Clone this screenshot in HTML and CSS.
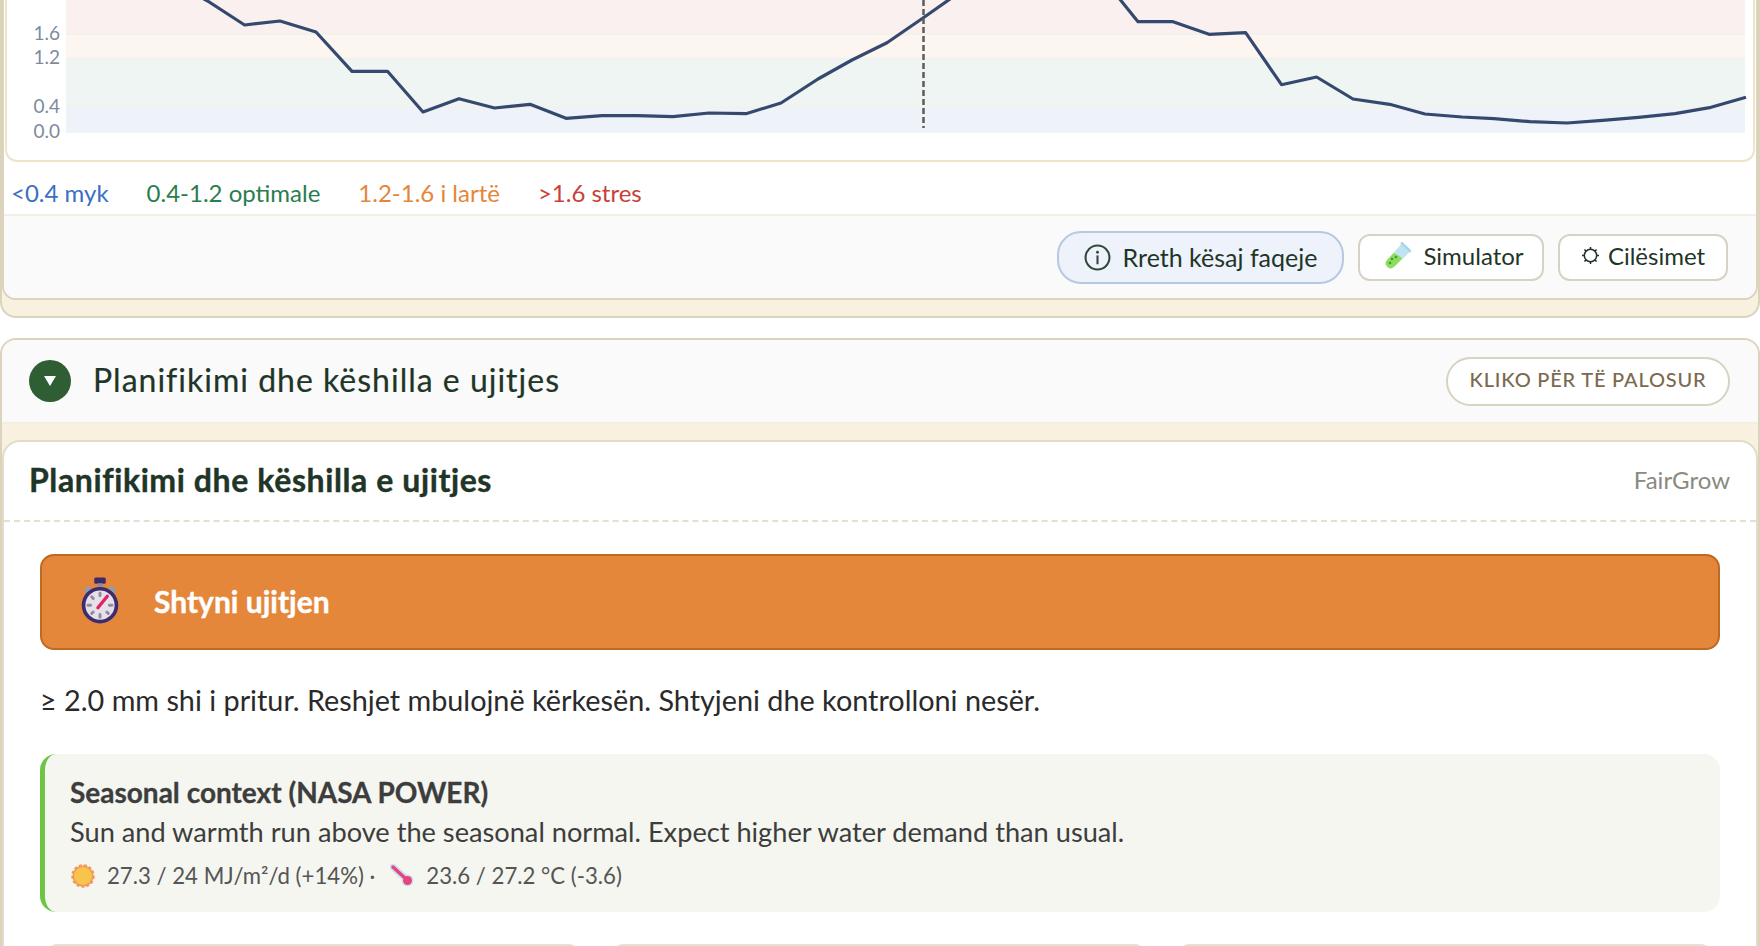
FILE: index.html
```html
<!DOCTYPE html>
<html lang="sq">
<head>
  <meta charset="UTF-8">
  <title>FairGrow - Planifikimi i ujitjes</title>
  <link rel="stylesheet" href="styles.css">
</head>

<body>

<section class="outer-card">
  <div class="panel">
    <div class="chart-box">
      <svg class="chart" viewBox="7 0 1746 142" width="1746" height="142">
        <rect x="66" y="0" width="1679" height="34" fill="#f9f0ef"/>
        <rect x="66" y="34" width="1679" height="24" fill="#fdf5ef"/>
        <rect x="66" y="58" width="1679" height="49" fill="#eff5f2"/>
        <rect x="66" y="107" width="1679" height="26" fill="#eef3fa"/>
        <g fill="#f1f1ee">
          <rect x="66" y="33" width="1679" height="2"/>
          <rect x="66" y="57.500" width="1679" height="2"/>
          <rect x="66" y="106.500" width="1679" height="2"/>
        </g>
        <g class="axis-label" text-anchor="end">
          <text x="60" y="40">1.6</text>
          <text x="60" y="64">1.2</text>
          <text x="60" y="113">0.4</text>
          <text x="60" y="138">0.0</text>
        </g>
        <polyline class="line" points="170,-20 207.600,1 244.600,25 280,21 316,32 352,71.300 387.500,71.300 423,112 459,98.700 494.600,108 530,104.300 566,118.300 602,115.700 637.500,115.700 673,116.700 709,113 746,113.700 781,103 818,79 852,60 887,42.700 923,18 960,-8 1000,-40 1090,-40 1120.500,0 1138,21.700 1173,21.700 1209,34.300 1245.600,32.700 1281.500,84.700 1316.600,77 1353,99 1389.700,104.300 1425,114 1462,117 1494,118.700 1530,121.700 1567,123 1602.600,120.300 1638.500,117.300 1675,113.700 1711,107.300 1746,97.300"/>
        <line class="cursor" x1="923.500" y1="0" x2="923.500" y2="128"/>
      </svg>
    </div>

    <div class="legend">
      <span class="soft">&lt;0.4 myk</span>
      <span class="good">0.4-1.2 optimale</span>
      <span class="high">1.2-1.6 i lartë</span>
      <span class="stress">&gt;1.6 stres</span>
    </div>

    <div class="toolbar">
      <button class="btn btn-info">
        <svg class="icon-info" viewBox="0 0 26 26" width="27" height="27">
          <circle cx="13" cy="13" r="11.500" fill="none" stroke="#2f4a3a" stroke-width="2"/>
          <circle cx="13" cy="8" r="1.400" fill="#2f4a3a"/>
          <rect x="12" y="11" width="2" height="8.500" fill="#2f4a3a"/>
        </svg>
        Rreth kësaj faqeje
      </button>
      <button class="btn btn-sim">
        <svg viewBox="0 0 28 28" width="28" height="28">
          <path d="M18 3 L26 10 L11 25 Q7 28 4 24.500 Q1 21 4 18 Z" fill="#8ddc5a"/>
          <path d="M18 3 L26 10 L19.500 16.500 Q15 13 10.500 11 Z" fill="#bfe3f5"/>
          <path d="M19 1.500 L27 9" stroke="#a9d5f0" stroke-width="3" stroke-linecap="round"/>
          <g fill="#3f9a4c">
            <circle cx="9" cy="17" r="1.300"/>
            <circle cx="13" cy="15" r="1.300"/>
            <circle cx="7" cy="21" r="1.300"/>
          </g>
        </svg>
        Simulator
      </button>
      <button class="btn btn-settings">
        <svg viewBox="0 0 20 20" width="19" height="19">
          <circle cx="10" cy="10" r="6.500" fill="none" stroke="#1f3527" stroke-width="1.600"/>
          <path d="M10 1v2.500M10 16.500V19M1 10h2.500M16.500 10H19M3.600 3.600l1.800 1.800M14.600 14.600l1.800 1.800M3.600 16.400l1.800-1.800M14.600 5.400l1.800-1.800" stroke="#1f3527" stroke-width="1.600"/>
        </svg>
        Cilësimet
      </button>
    </div>
  </div>
</section>

<section class="outer-card second">
  <div class="section-head">
    <span class="toggle"><span class="toggle-arrow"></span></span>
    <h2>Planifikimi dhe këshilla e ujitjes</h2>
    <span class="fold-pill">KLIKO PËR TË PALOSUR</span>
  </div>

  <div class="section-body">
    <div class="panel panel-open">
      <div class="panel-head">
        <h3>Planifikimi dhe këshilla e ujitjes</h3>
        <span class="brand">FairGrow</span>
      </div>

      <div class="panel-content">
        <div class="alert">
          <svg viewBox="0 0 36 46" width="38" height="48">
            <rect x="12.500" y="0.500" width="11" height="6" rx="1.500" fill="#3c2a6b"/>
            <rect x="15.500" y="6" width="5" height="4" fill="#8d8d96"/>
            <path d="M2 14 L6.500 8 L10.500 11.500 L6 17 Z" fill="#9a9aa3"/>
            <path d="M34 14 L29.500 8 L25.500 11.500 L30 17 Z" fill="#9a9aa3"/>
            <circle cx="18" cy="27" r="17.500" fill="#3d2d6e"/>
            <circle cx="18" cy="27" r="14" fill="#e6e0ec"/>
            <g stroke="#8f8d98" stroke-width="2.800" stroke-linecap="round">
              <path d="M18 15.500v2.500M18 36v2.500M6.500 27H9M27 27h2.500M10 19l1.500 1.500M24.500 33.500l1.500 1.500M10 35l1.500-1.500"/>
            </g>
            <path d="M16 29.500 L25 18.500" stroke="#e0245e" stroke-width="3.200" stroke-linecap="round"/>
          </svg>
          <span class="alert-title">Shtyni ujitjen</span>
        </div>

        <p class="advice">≥ 2.0 mm shi i pritur. Reshjet mbulojnë kërkesën. Shtyjeni dhe kontrolloni nesër.</p>

        <div class="season">
          <strong>Seasonal context (NASA POWER)</strong>
          <p>Sun and warmth run above the seasonal normal. Expect higher water demand than usual.</p>
          <div class="season-meta">
            <svg viewBox="0 0 24 24" width="24" height="24">
              <circle cx="12" cy="12" r="10.500" fill="#f4975a" stroke="#f4975a" stroke-width="2.500" stroke-dasharray="3 2"/>
              <circle cx="12" cy="12" r="9" fill="#f7c44c"/>
            </svg>
            <span>27.3 / 24 MJ/m²/d (+14%) ·</span>
            <svg class="thermo" viewBox="0 0 24 24" width="24" height="24">
              <path d="M3 3 L16 15" stroke="#c9e3f5" stroke-width="7" stroke-linecap="round"/>
              <circle cx="17.500" cy="16.500" r="6" fill="#c9e3f5"/>
              <path d="M3 3 L16 15" stroke="#e8457f" stroke-width="3.500" stroke-linecap="round"/>
              <circle cx="17.500" cy="16.500" r="4.500" fill="#e8457f"/>
            </svg>
            <span>23.6 / 27.2 °C (-3.6)</span>
          </div>
        </div>

        <div class="tips">
          <div class="tip"></div>
          <div class="tip"></div>
          <div class="tip"></div>
        </div>
      </div>
    </div>
  </div>
</section>

</body>
</html>
```

FILE: styles.css
```css
* {
  margin: 0;
  padding: 0;
  box-sizing: border-box;
  font-family: 'Lato', sans-serif;
}

html, body {
  height: 946px;
  overflow: hidden;
}

body {
  background-color: #fff;
}

.outer-card {
  background-color: #f8f1df;
  border: solid #dcd3bd;
  border-width: 0 2px 2px;
  border-radius: 0 0 16px 16px;
  padding-bottom: 16px;
}

.outer-card.second {
  margin-top: 20px;
  border-width: 2px 2px 0;
  border-radius: 16px 16px 0 0;
  padding-bottom: 0;
  overflow: hidden;
}

.panel {
  background-color: #fff;
  border: solid #dcd3bd;
  border-width: 0 2px 2px;
  border-radius: 0 0 14px 14px;
  overflow: hidden;
}

.chart-box {
  height: 162px;
  margin: 0 1px;
  border: solid #efe3c8;
  border-width: 0 2px 2px;
  border-radius: 0 0 12px 12px;
}

.chart {
  display: block;
}

.axis-label text {
  font-size: 19px;
  fill: #7d8b9c;
}

.line {
  fill: none;
  stroke: #35496f;
  stroke-width: 3.200;
  stroke-linejoin: round;
}

.cursor {
  stroke: #5c5c5c;
  stroke-width: 2.500;
  stroke-dasharray: 6 3;
}

.legend {
  display: flex;
  align-items: center;
  gap: 38px;
  height: 52px;
  padding: 9px 0 0 7px;
  font-size: 24px;
}

.soft { color: #3a6fc4; }
.good { color: #2a7d4f; }
.high { color: #e4863a; }
.stress { color: #c9403a; }

.toolbar {
  display: flex;
  justify-content: flex-end;
  align-items: center;
  gap: 14px;
  height: 84px;
  padding-right: 28px;
  background-color: #fafafa;
  border-top: 2px solid #f3efe4;
}

.btn {
  display: flex;
  align-items: center;
  justify-content: center;
  gap: 12px;
  height: 47px;
  width: 185px;
  padding-bottom: 3px;
  background-color: #fff;
  border: 2px solid #d8d2c4;
  border-radius: 12px;
  color: #1f3527;
  font-size: 24px;
}

.btn-sim {
  width: 186px;
  padding-left: 5px;
}

.btn-settings {
  width: 170px;
  gap: 8px;
}

.btn-info {
  width: 287px;
  height: 53px;
  padding-bottom: 0;
  border-color: #b8c8e2;
  border-radius: 24px;
  background-color: #edf2fb;
  font-size: 25px;
}

.section-head {
  display: flex;
  align-items: center;
  height: 84px;
  padding: 0 28px 0 27px;
  background-color: #fafafa;
  border-bottom: 2px solid #f3efe4;
}

.toggle {
  display: flex;
  align-items: center;
  justify-content: center;
  width: 42px;
  height: 42px;
  border-radius: 50%;
  background-color: #2f5d34;
}

.toggle-arrow {
  width: 0;
  height: 0;
  border-left: 6px solid transparent;
  border-right: 6px solid transparent;
  border-top: 10px solid #fff;
}

.section-head h2 {
  margin-left: 22px;
  padding-bottom: 3px;
  font-size: 32px;
  font-weight: 400;
  letter-spacing: 1px;
  -webkit-text-stroke: 0.2px;
  color: #1f3527;
}

.fold-pill {
  display: flex;
  align-items: center;
  justify-content: center;
  margin-left: auto;
  width: 284px;
  height: 49px;
  padding-bottom: 4px;
  background-color: #fff;
  border: 2px solid #d8d2c0;
  border-radius: 25px;
  color: #7a6a50;
  font-size: 20px;
  font-weight: 500;
  letter-spacing: 0.8px;
}

.section-body {
  padding-top: 16px;
  background-color: #f8f1df;
}

.panel-open {
  border-width: 2px 2px 0;
  border-radius: 18px 18px 0 0;
  border-color: #e3dcc8;
  height: 520px;
}

.panel-head {
  display: flex;
  align-items: center;
  justify-content: space-between;
  height: 80px;
  padding: 0 26px 4px 25px;
  border-bottom: 2px dashed #e5dfcf;
}

.panel-head h3 {
  font-size: 32px;
  font-weight: 700;
  letter-spacing: 0.6px;
  -webkit-text-stroke: 0.4px;
  color: #1f3527;
}

.brand {
  font-size: 24px;
  color: #8a8a80;
}

.panel-content {
  padding: 32px 36px 0;
}

.alert {
  display: flex;
  align-items: center;
  gap: 35px;
  height: 96px;
  padding: 0 0 3px 39px;
  background-color: #e5873b;
  border: 2px solid #bf6a22;
  border-radius: 14px;
}

.alert-title {
  color: #fff;
  font-size: 30px;
  font-weight: 700;
  -webkit-text-stroke: 0.4px;
}

.advice {
  margin: 29px 0 33px;
  font-size: 28.800px;
  line-height: 42px;
  color: #2a2a2a;
}

.season {
  height: 158px;
  padding: 20px 25px;
  background-color: #f4f6ef;
  border-left: 5px solid #6cc644;
  border-radius: 16px;
  color: #3d3d3d;
}

.season strong {
  display: block;
  margin-bottom: 2px;
  font-size: 28px;
  line-height: 36px;
  -webkit-text-stroke: 0.3px;
}

.season p {
  font-size: 27.200px;
  line-height: 40px;
}

.season-meta {
  display: flex;
  align-items: center;
  gap: 12px;
  margin: 10px 0 0 1px;
  font-size: 22.200px;
  color: #555;
}

.thermo {
  margin-left: 3px;
}

.tips {
  display: grid;
  grid-template-columns: repeat(3, 1fr);
  gap: 34px;
  margin: 32px 9px 0 7px;
}

.tip {
  height: 80px;
  border: 2px solid #e8e0d0;
  border-radius: 10px;
}
```
